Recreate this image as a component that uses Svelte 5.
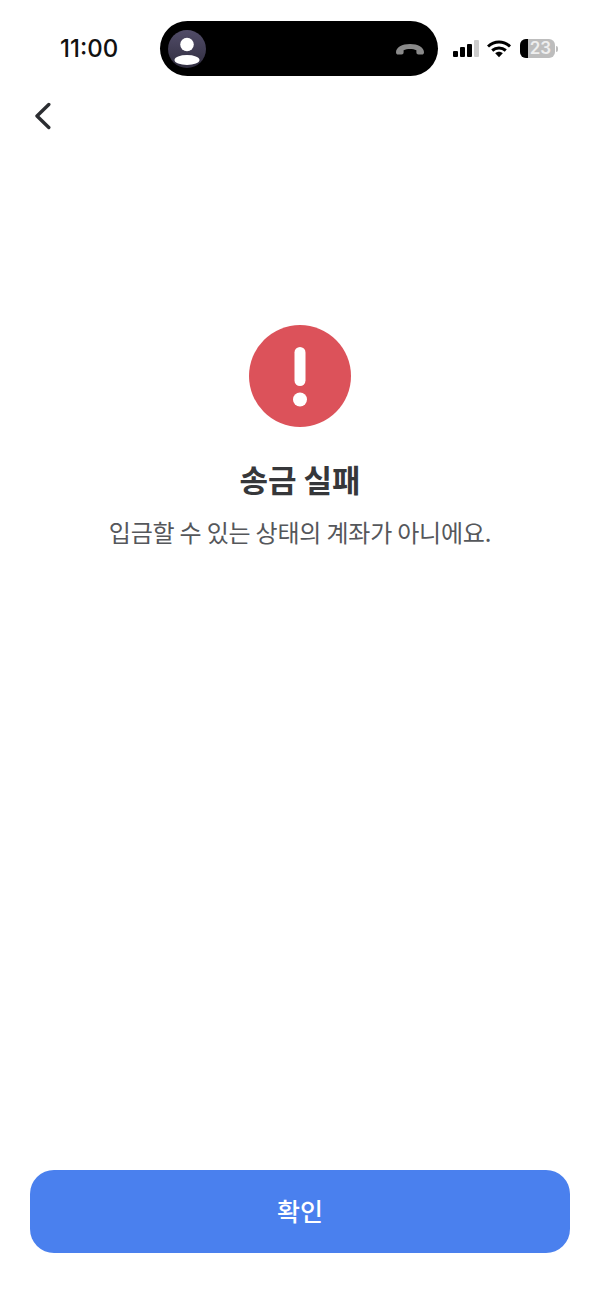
<script lang="ts">
  const title = "송금 실패";
  const message = "입금할 수 있는 상태의 계좌가 아니에요.";
  const signalBars = [
    { h: 6, on: true },
    { h: 10, on: true },
    { h: 13, on: true },
    { h: 17, on: false },
  ];
</script>

<div class="screen">
  <header class="status">
    <span class="time">11:00</span>
    <div class="island">
      <svg class="avatar" viewBox="0 0 38 38" width="38" height="38" aria-hidden="true">
        <defs>
          <linearGradient id="avatarFill" x1="0" y1="0" x2="0" y2="1">
            <stop offset="0" stop-color="#514c68" />
            <stop offset="1" stop-color="#312e40" />
          </linearGradient>
        </defs>
        <circle cx="19" cy="19" r="19" fill="url(#avatarFill)" />
        <circle cx="19" cy="14.500" r="6.800" fill="#fff" />
        <ellipse cx="19" cy="30" rx="12.500" ry="5" fill="#fff" />
      </svg>
      <svg class="hangup" viewBox="0 0 30 14" width="30" height="14" aria-hidden="true">
        <path
          d="M1 10.200C1 5.500 7 2 15 2s14 3.500 14 8.200c0 1.500-.9 2.300-2.200 2.300h-3.300c-1.300 0-2.100-.8-2.100-2V8.300C19.600 7.300 17.500 6.900 15 6.900s-4.600.4-6.400 1.400v2.200c0 1.200-.8 2-2.100 2H3.200C1.900 12.500 1 11.700 1 10.200Z"
          fill="#8a8a8a"
        />
      </svg>
    </div>
    <div class="indicators">
      <div class="signal">
        {#each signalBars as bar}
          <span class="bar" class:off={!bar.on} style={`height:${bar.h}px`}></span>
        {/each}
      </div>
      <svg viewBox="0 0 24 18" width="24" height="18" aria-hidden="true">
        <path d="M1 6.500C7.500.5 16.500.5 23 6.500" fill="none" stroke="#000" stroke-width="3" />
        <path d="M5.200 10.500C9.200 7 14.800 7 18.800 10.500" fill="none" stroke="#000" stroke-width="3" />
        <path d="M8.200 13.300 12 17.300l3.800-4C13.500 11.300 10.500 11.300 8.200 13.300Z" fill="#000" />
      </svg>
      <div class="battery">
        <div class="cell">
          <span class="level"></span>
          <span class="pct">23</span>
        </div>
        <span class="nub"></span>
      </div>
    </div>
  </header>

  <nav class="nav">
    <button class="back" aria-label="뒤로">
      <svg viewBox="0 0 16 28" width="16" height="28" aria-hidden="true">
        <path d="M13.800 2.500 2 14l11.800 11.500" fill="none" stroke="#2b2d31" stroke-width="3.400" stroke-linecap="round" stroke-linejoin="round" />
      </svg>
    </button>
  </nav>

  <main class="result">
    <svg class="alert" viewBox="0 0 102 102" width="102" height="102" aria-hidden="true">
      <circle cx="51" cy="51" r="51" fill="#dc525a" />
      <rect x="45.500" y="22" width="11" height="39" rx="5.500" fill="#fff" />
      <circle cx="51" cy="74.500" r="7" fill="#fff" />
    </svg>
    <h1>{title}</h1>
    <p>{message}</p>
  </main>

  <footer class="actions">
    <button class="confirm">확인</button>
  </footer>
</div>

<style>
  :global(body) {
    margin: 0;
    background: #fff;
  }
  .screen {
    width: 600px;
    height: 1304px;
    display: flex;
    flex-direction: column;
    background: #fff;
    font-family: "Noto Sans CJK KR", "Noto Sans", sans-serif;
    overflow: hidden;
  }
  .status {
    height: 55px;
    margin-top: 21px;
    display: flex;
    align-items: center;
    flex: none;
  }
  .time {
    width: 160px;
    padding-left: 60px;
    box-sizing: border-box;
    font-family: Inter, "Liberation Sans", sans-serif;
    font-size: 24px;
    font-weight: 500;
    color: #111;
  }
  .island {
    width: 278px;
    height: 55px;
    border-radius: 28px;
    background: #000;
    display: flex;
    align-items: center;
    justify-content: space-between;
    padding: 0 13px 0 8px;
    box-sizing: border-box;
  }
  .avatar,
  .hangup {
    display: block;
  }
  .indicators {
    display: flex;
    align-items: center;
    margin-left: 15px;
    gap: 8px;
  }
  .signal {
    display: flex;
    align-items: flex-end;
    gap: 2px;
    height: 17px;
  }
  .bar {
    width: 5px;
    background: #000;
    border-radius: 1px;
  }
  .bar.off {
    background: #ccc;
  }
  .battery {
    display: flex;
    align-items: center;
    gap: 1px;
    margin-left: 1px;
  }
  .cell {
    position: relative;
    width: 35px;
    height: 19px;
    border-radius: 6px;
    background: #bdbdbd;
    overflow: hidden;
  }
  .level {
    position: absolute;
    left: 0;
    top: 0;
    bottom: 0;
    width: 8px;
    background: #000;
  }
  .pct {
    position: absolute;
    left: 6px;
    right: 0;
    top: 0;
    text-align: center;
    font-family: Inter, "Liberation Sans", sans-serif;
    font-size: 17px;
    font-weight: 600;
    line-height: 19px;
    color: #eee;
  }
  .nub {
    width: 2px;
    height: 6px;
    border-radius: 0 2px 2px 0;
    background: #bdbdbd;
  }
  .nav {
    flex: none;
    height: 54px;
    margin-top: 26px;
    padding-left: 35px;
  }
  .back {
    display: block;
    padding: 0;
    border: 0;
    background: none;
  }
  .back svg {
    display: block;
  }
  .result {
    flex: 1;
    display: flex;
    flex-direction: column;
    align-items: center;
    padding-top: 169px;
  }
  .alert {
    display: block;
  }
  h1 {
    margin: 30px 0 0;
    font-size: 31px;
    line-height: 44px;
    font-weight: 700;
    color: #36373a;
  }
  p {
    margin: 13px 0 0;
    font-size: 24px;
    letter-spacing: -0.2px;
    line-height: 36px;
    font-weight: 400;
    color: #55575b;
  }
  .actions {
    flex: none;
    padding: 0 30px 51px;
  }
  .confirm {
    display: block;
    width: 100%;
    height: 83px;
    padding: 0 0 3px;
    border: 0;
    border-radius: 24px;
    background: #4a80ee;
    color: #fff;
    font-family: inherit;
    font-size: 25px;
    font-weight: 500;
  }
</style>
